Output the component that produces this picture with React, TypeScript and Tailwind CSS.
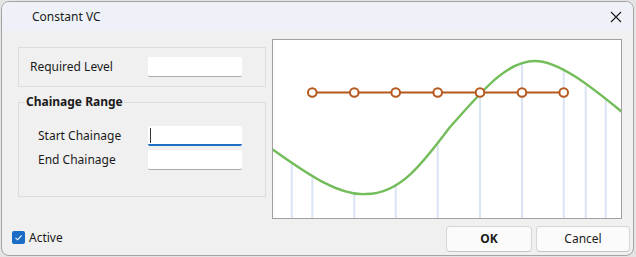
import React from "react";

const F = { fontFamily: '"Noto Sans", "Open Sans", Arial, sans-serif' };

function Chart() {
  const ox = 272;
  const oy = 39;
  const vlines: [number, number][] = [
    [291.7, 163],
    [312.3, 178],
    [354.3, 194],
    [395.7, 186],
    [437.7, 145],
    [480, 93],
    [522, 63],
    [563.7, 70],
    [585.7, 86],
    [605.7, 100],
  ];
  const circles = [312.3, 354.3, 395.7, 437.7, 480, 522, 563.7];
  const t = (x: number) => x - ox;
  const u = (y: number) => y - oy;
  const curve = `M${t(272)},${u(149)} C${t(310)},${u(176)} ${t(340)},${u(196)} ${t(366)},${u(194)} C${t(400)},${u(194)} ${t(423)},${u(163)} ${t(450)},${u(127)} C${t(480)},${u(94)} ${t(505)},${u(61)} ${t(535)},${u(61)} C${t(560)},${u(61)} ${t(595)},${u(90)} ${t(622)},${u(112)}`;
  return (
    <div className="ml-[6px] w-[350px] h-[180px] border border-[#a0a0a0] bg-white overflow-hidden">
      <svg width="348" height="178" viewBox="1 1 348 178">
        {vlines.map(([x, y], i) => (
          <line key={i} x1={t(x)} y1={u(y)} x2={t(x)} y2={180} stroke="#dbe4f4" strokeWidth="2" />
        ))}
        <path d={curve} fill="none" stroke="#72bd5a" strokeWidth="2.4" />
        <line x1={t(312.3)} y1={u(92.5)} x2={t(563.7)} y2={u(92.5)} stroke="#b4581e" strokeWidth="2" />
        {circles.map((x, i) => (
          <circle key={i} cx={t(x)} cy={u(92.5)} r="4.3" fill="white" stroke="#b4581e" strokeWidth="2" />
        ))}
      </svg>
    </div>
  );
}

function Input({ focused }: { focused?: boolean }) {
  return (
    <div
      className={
        "relative w-[94px] h-[20px] bg-white rounded-[2px] " +
        (focused ? "border-b-2 border-[#1f6fc6]" : "border-b border-[#a9a9a9]")
      }
    >
      {focused && <div className="absolute left-[2px] top-[2px] w-px h-[15px] bg-[#333]" />}
    </div>
  );
}

export default function App() {
  return (
    <div className="w-[636px] h-[257px] bg-[#e4e4e4] p-px" style={F}>
      <div className="w-[633px] h-[255px] border border-[#a4a4a4] rounded-[8px] overflow-hidden bg-[#f0f0f0] flex flex-col text-[12px] text-[#1b1b1b]">
        <div className="h-[29px] bg-[#eef2f8] flex items-center justify-between pl-[30px] pr-[10px]">
          <span className="text-[12px] leading-none pt-[1px]">Constant VC</span>
          <svg width="12" height="12" viewBox="0 0 12 12" className="mr-[1px]">
            <path d="M1 1 L11 11 M11 1 L1 11" stroke="#1a1a1a" strokeWidth="1.1" />
          </svg>
        </div>
        <div className="flex pl-[16px] pt-[8px]">
          <div className="w-[248px] pt-[8px]">
            <div className="h-[40px] border border-[#dcdcdc] flex items-center pl-[11px]">
              <span className="w-[118px]">Required Level</span>
              <Input />
            </div>
            <div className="relative mt-[15px] h-[95px] border border-[#dcdcdc] pl-[19px] pt-[23px]">
              <span className="absolute left-[6px] top-[-9px] bg-[#f0f0f0] px-px font-bold leading-[16px]">
                Chainage Range
              </span>
              <div className="flex items-center h-[20px]">
                <span className="w-[110px]">Start Chainage</span>
                <Input focused />
              </div>
              <div className="flex items-center h-[20px] mt-[4px]">
                <span className="w-[110px]">End Chainage</span>
                <Input />
              </div>
            </div>
          </div>
          <Chart />
        </div>
        <div className="flex items-center justify-between pl-[10px] pr-[3px] mt-[7px]">
          <div className="flex items-center gap-[4px] mt-[-3px]">
            <div className="w-[13px] h-[13px] rounded-[2px] bg-[#1a6cc6] flex items-center justify-center">
              <svg width="9" height="9" viewBox="0 0 9 9">
                <path d="M1.5 4.8 L3.6 6.8 L7.6 2.3" fill="none" stroke="white" strokeWidth="1.1" />
              </svg>
            </div>
            <span>Active</span>
          </div>
          <div className="flex gap-[4px]">
            <button className="w-[86px] h-[26px] bg-[#fbfbfb] border border-[#d6d6d6] border-b-[#c4c4c4] rounded-[4px] font-bold text-[12px]">
              OK
            </button>
            <button className="w-[94px] h-[26px] bg-[#fbfbfb] border border-[#d6d6d6] border-b-[#c4c4c4] rounded-[4px] text-[12px]">
              Cancel
            </button>
          </div>
        </div>
      </div>
    </div>
  );
}
